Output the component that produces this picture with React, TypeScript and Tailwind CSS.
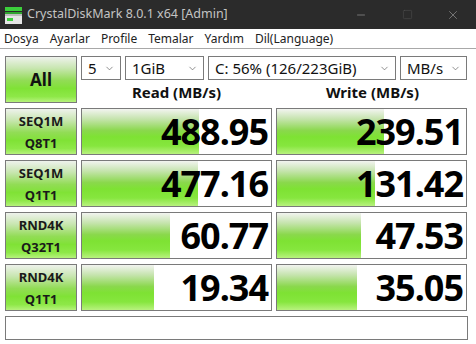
import { ChevronDown, Minus, Square, X } from "lucide-react";

const barBg =
  "bg-[linear-gradient(to_bottom,#f2f4f0_0%,#c6e4ae_22%,#8ad84c_48%,#7ee233_62%,#86e63e_82%,#b8f27e_100%)]";

const labelBg =
  "bg-[linear-gradient(to_bottom,#eef2ec_0%,#c8e6b0_25%,#92dc56_52%,#80e236_70%,#8ee848_88%,#b6f27c_100%)]";

const rows = [
  { top: "SEQ1M", bottom: "Q8T1", read: "488.95", readW: 117, write: "239.51", writeW: 107 },
  { top: "SEQ1M", bottom: "Q1T1", read: "477.16", readW: 116, write: "131.42", writeW: 98 },
  { top: "RND4K", bottom: "Q32T1", read: "60.77", readW: 88, write: "47.53", writeW: 84 },
  { top: "RND4K", bottom: "Q1T1", read: "19.34", readW: 72, write: "35.05", writeW: 80 },
];

const menu = ["Dosya", "Ayarlar", "Profile", "Temalar", "Yardım", "Dil(Language)"];

function AppIcon() {
  return (
    <svg width="17" height="17" viewBox="0 0 17 17">
      <rect x="0" y="0" width="17" height="4" fill="#3ccf3c" />
      <rect x="0" y="5" width="17" height="2" fill="#2fa52f" />
      <rect x="0" y="7" width="17" height="10" fill="#e6e6e6" />
      <rect x="0" y="7" width="17" height="2" fill="#bdbdbd" />
      <rect x="2" y="11" width="6" height="3" fill="#3ccf3c" />
    </svg>
  );
}

function Dropdown({ value, w }: { value: string; w: string }) {
  return (
    <div className={`${w} flex h-[24px] items-center justify-between border border-[#7a7a7a] bg-white pl-[6px] pr-[5px] text-[15px] text-[#111]`}>
      <span className="leading-none">{value}</span>
      <ChevronDown size={11} strokeWidth={1.5} className="text-[#606060]" />
    </div>
  );
}

function Cell({ value, width }: { value: string; width: number }) {
  return (
    <div className="relative flex h-[47px] items-center justify-end border border-[#7a7a7a] bg-white pr-[3px]">
      <div className={`absolute left-0 top-0 h-full ${barBg}`} style={{ width }} />
      <span className="relative text-[36px] font-bold leading-none tracking-[-1px] text-black">{value}</span>
    </div>
  );
}

export default function App() {
  return (
    <div className="h-[344px] w-[476px] overflow-hidden bg-white font-['Noto_Sans','Open_Sans',sans-serif]">
      <div className="flex h-[29px] items-center bg-[#2b2b2b]">
        <div className="ml-[5px] mt-[1px]">
          <AppIcon />
        </div>
        <span className="ml-[5px] text-[12.5px] text-[#c4c4c4]">CrystalDiskMark 8.0.1 x64 [Admin]</span>
        <div className="ml-auto flex items-center">
          <div className="flex w-[46px] justify-center text-[#bdbdbd]">
            <Minus size={12} strokeWidth={1} />
          </div>
          <div className="flex w-[46px] justify-center text-[#565656]">
            <Square size={11} strokeWidth={1} />
          </div>
          <div className="flex w-[46px] justify-center text-[#a8a8a8]">
            <X size={14} strokeWidth={1} />
          </div>
        </div>
      </div>

      <div className="flex h-[20px] items-center gap-[11px] border-b border-[#a8a8a8] pl-[4px] text-[12px] text-[#222]">
        {menu.map((m) => (
          <span key={m}>{m}</span>
        ))}
      </div>

      <div className="flex flex-col gap-[5px] pl-[5px] pt-[7px]">
        <div className="flex gap-[4px]">
          <div className={`flex h-[47px] w-[72px] items-center justify-center border border-[#7a7a7a] ${labelBg}`}>
            <span className="text-[17px] font-bold text-[#111]">All</span>
          </div>
          <div className="flex flex-col">
            <div className="flex gap-[4px]">
              <Dropdown value="5" w="w-[40px]" />
              <Dropdown value="1GiB" w="w-[79px]" />
              <Dropdown value="C: 56% (126/223GiB)" w="w-[188px]" />
              <Dropdown value="MB/s" w="w-[67px]" />
            </div>
            <div className="grid h-[23px] grid-cols-[191px_191px] gap-x-[5px] text-[15px] font-bold text-[#111]">
              <div className="flex items-end justify-center leading-[22px]">Read (MB/s)</div>
              <div className="flex items-end justify-center leading-[22px]">Write (MB/s)</div>
            </div>
          </div>
        </div>

        {rows.map((r) => (
          <div key={r.top + r.bottom} className="grid grid-cols-[72px_191px_191px] gap-x-[4px]">
            <div className={`flex h-[47px] flex-col items-center justify-center border border-[#7a7a7a] text-[13px] font-bold leading-[22px] text-[#1a1a1a] ${labelBg}`}>
              <span>{r.top}</span>
              <span>{r.bottom}</span>
            </div>
            <Cell value={r.read} width={r.readW} />
            <Cell value={r.write} width={r.writeW} />
          </div>
        ))}

        <div className="h-[24px] w-[463px] border border-[#7a7a7a] bg-white" />
      </div>
    </div>
  );
}
